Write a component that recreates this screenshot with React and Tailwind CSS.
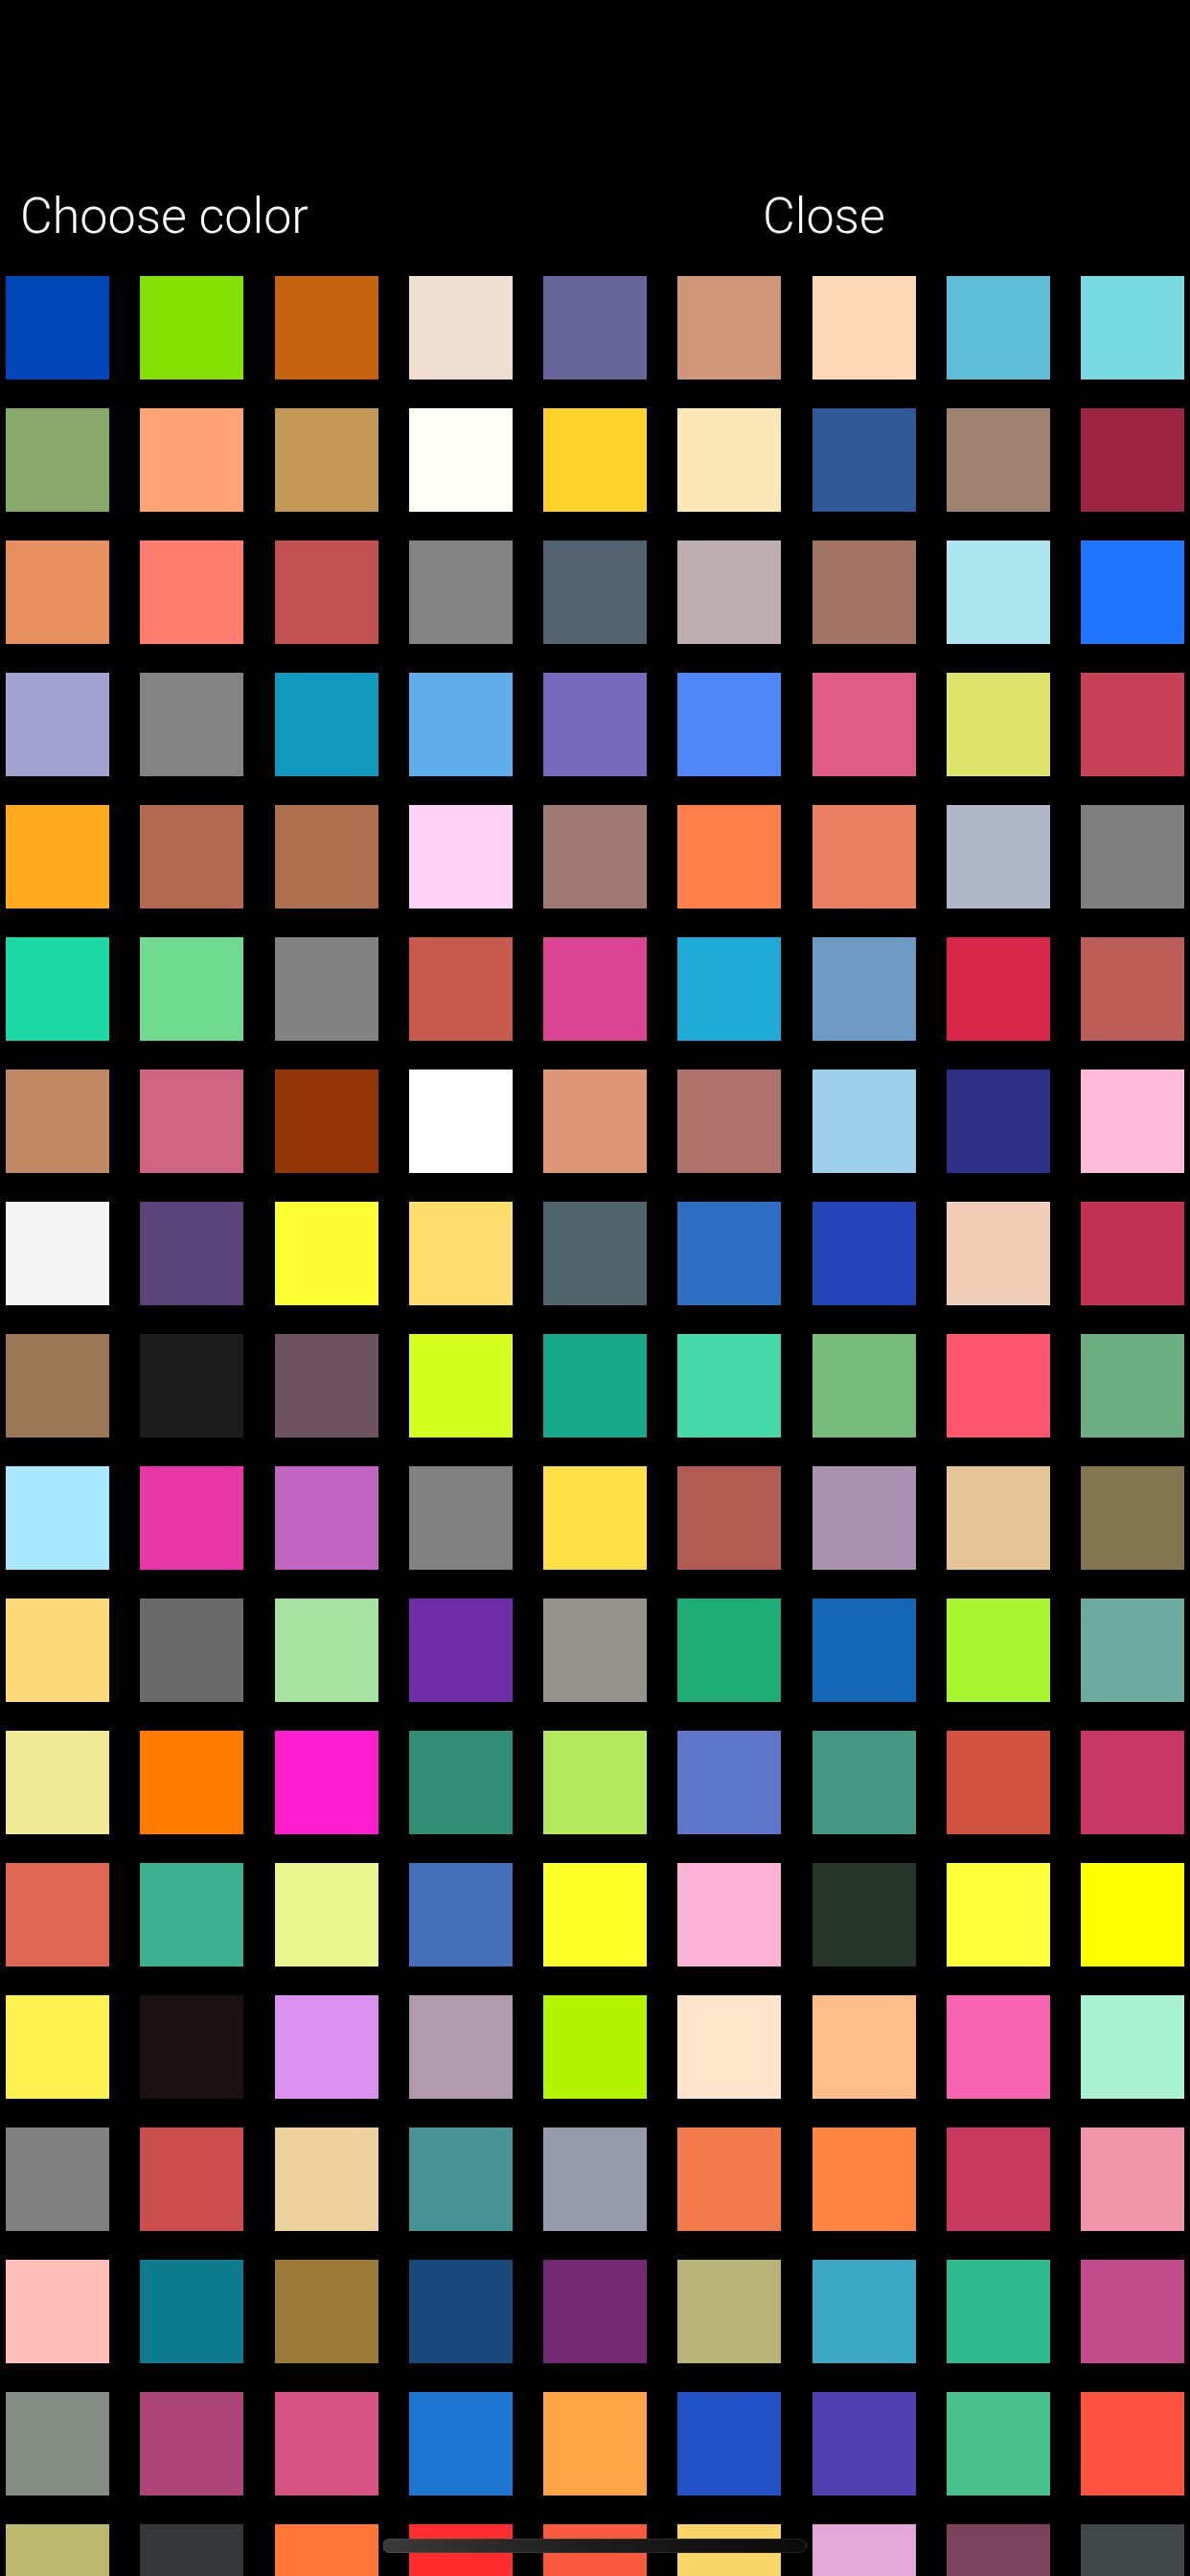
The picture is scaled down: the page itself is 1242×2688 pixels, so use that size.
import React from 'react';

// swatch colours, row by row (9 per row)
const colors = [
  '#0048BA', '#85E000', '#C4620F', '#EFDFD0', '#67659A', '#D09678', '#FED9B7', '#5FBCD7', '#79DBE1',
  '#88A96C', '#FFA476', '#C49955', '#FFFFF8', '#FFD22B', '#FCE7B6', '#2E5994', '#9E8371', '#9B2542',
  '#E88F5F', '#FF7E70', '#C05052', '#838383', '#546370', '#BEAEB1', '#A37366', '#ADE6EF', '#2176FF',
  '#A2A3D0', '#838383', '#0F99BE', '#5FADEB', '#776ABE', '#5087F8', '#DE5C84', '#DEE36C', '#C84055',
  '#FFAA1E', '#B3694F', '#AE6F4F', '#FFD3F7', '#9E7A72', '#FF7F4A', '#EB7F61', '#AFB6C7', '#7F7F7F',
  '#1DD9A5', '#6EDB8E', '#828282', '#C75A4A', '#DB4593', '#1EACD6', '#6E9BC4', '#D9274A', '#BC5E58',
  '#BF8764', '#CF6482', '#933507', '#FFFFFF', '#DF9677', '#AF736C', '#9ECFEB', '#2E2F87', '#FFBBD8',
  '#F5F5F5', '#5A457A', '#FFFF33', '#FEDC6D', '#4C646A', '#2D6EC3', '#2345B8', '#F0CEB8', '#C33252',
  '#9A7855', '#1C1C1C', '#6F5361', '#D4FF1F', '#15A889', '#45D8A8', '#76BB7B', '#FF5670', '#6CAD81',
  '#AAE8FF', '#E736A6', '#C264C2', '#818181', '#FFE048', '#B05C53', '#AB92B3', '#E6C698', '#837550',
  '#FDDA79', '#6A6A6A', '#A7E3A0', '#6F2DA8', '#95928D', '#1EAD76', '#1266B5', '#A9F532', '#6DAAA0',
  '#F0EA96', '#FF7C00', '#FF1DCF', '#318E75', '#B3EA5E', '#5E77CA', '#459883', '#D1533F', '#C73665',
  '#DD6551', '#3CB18F', '#EAF78F', '#4570BA', '#FFFF2A', '#FCB2D5', '#25352A', '#FFFF3A', '#FFFF00',
  '#FFF150', '#1B1111', '#DA91F1', '#B09AAC', '#B4F500', '#FFE5CB', '#FFBF8A', '#F864AF', '#ABF2D4',
  '#808080', '#CC4D4E', '#EDD29D', '#489395', '#979BAB', '#F37A4B', '#FF8441', '#C8385D', '#EF95A7',
  '#FFBEB8', '#0D7D8E', '#9C7A38', '#19487A', '#732872', '#BAB377', '#3BA8C4', '#2EBA8E', '#C24C8B',
  '#848D84', '#AD4478', '#D65384', '#1C76D2', '#FFA344', '#2251C8', '#5041B3', '#48C08E', '#FF5341',
  '#BCB96F', '#333737', '#FF7638', '#FF2D2D', '#F95A3E', '#F7D567', '#E4A8D8', '#7B425B', '#3F4749',
];

function App() {
  return (
    <div className="relative h-[2688px] w-[1242px] overflow-hidden bg-black font-['Roboto',sans-serif]">
      {/* header */}
      <div className="flex h-[288px] items-start pt-[200px] text-[52px] font-light leading-[52px] text-white">
        <div className="w-[796px] pl-[21px]">Choose color</div>
        <button className="leading-[52px]">Close</button>
      </div>

      {/* swatches */}
      <div className="grid grid-cols-9 gap-x-[32.25px] gap-y-[30px] px-[6px]">
        {colors.map((c, i) => (
          <div key={i} className="h-[108px] w-[108px]" style={{ backgroundColor: c }} />
        ))}
      </div>

      {/* home indicator */}
      <div className="absolute left-[399px] top-[2649px] h-[15px] w-[443px] rounded-full border border-white/10 bg-gradient-to-r from-[#3a3a3a] via-[#1c1c1c] to-[#0a0a0a]" />
    </div>
  );
}

export default App;
